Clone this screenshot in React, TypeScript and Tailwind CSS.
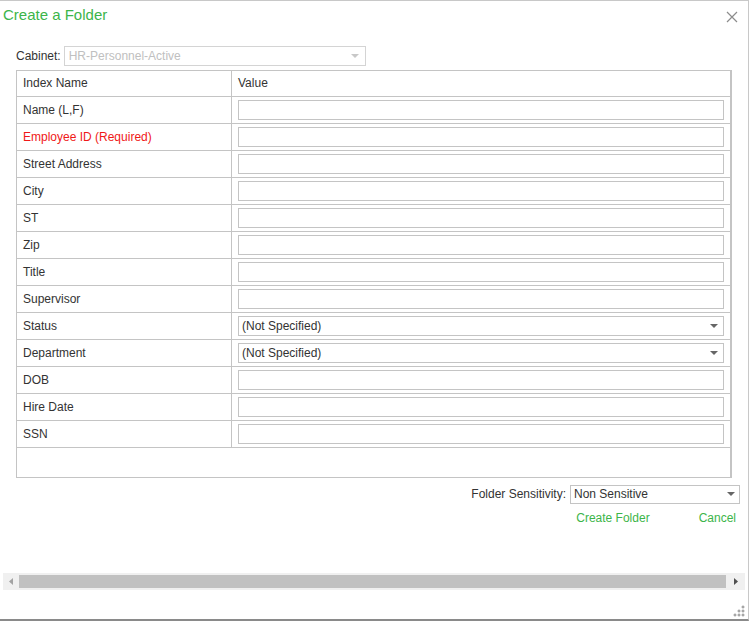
import React from 'react';

interface IndexField {
  name: string;
  kind: 'text' | 'select';
  required?: boolean;
}

const fields: IndexField[] = [
  { name: 'Name (L,F)', kind: 'text' },
  { name: 'Employee ID (Required)', kind: 'text', required: true },
  { name: 'Street Address', kind: 'text' },
  { name: 'City', kind: 'text' },
  { name: 'ST', kind: 'text' },
  { name: 'Zip', kind: 'text' },
  { name: 'Title', kind: 'text' },
  { name: 'Supervisor', kind: 'text' },
  { name: 'Status', kind: 'select' },
  { name: 'Department', kind: 'select' },
  { name: 'DOB', kind: 'text' },
  { name: 'Hire Date', kind: 'text' },
  { name: 'SSN', kind: 'text' },
];

const Caret = ({ color = '#666' }: { color?: string }) => (
  <svg width="8" height="4" viewBox="0 0 8 4">
    <path d="M0 0 L8 0 L4 4 Z" fill={color} />
  </svg>
);

export default function App() {
  return (
    <div className="w-[749px] h-[621px] bg-white text-[12px] text-[#333] font-['Liberation_Sans',Arial,sans-serif]">
      <div className="h-[621px] border-t border-r border-b-2 border-t-[#c8c8c8] border-r-[#c8c8c8] border-b-[#8a8a8a] flex flex-col">
        {/* header */}
        <div className="h-[28px] flex items-center justify-between pl-[3px] pr-[10px]">
          <span className="text-[15px] text-[#3cb54a]">Create a Folder</span>
          <svg width="12" height="12" viewBox="0 0 12 12" className="mt-[3px]">
            <path d="M1 1 L11 11 M11 1 L1 11" stroke="#8c8c8c" strokeWidth="1.2" />
          </svg>
        </div>

        {/* cabinet */}
        <div className="mt-[17px] h-[20px] flex items-center pl-[16px] leading-none pb-[1px]">
          <span className="mr-[3px]">Cabinet:</span>
          <div className="w-[302px] h-[20px] border border-[#d4d4d4] flex items-center justify-between pl-[4px] pr-[6px]">
            <span className="text-[#c0c0c0]">HR-Personnel-Active</span>
            <Caret color="#c8c8c8" />
          </div>
        </div>

        {/* index table */}
        <div className="mt-[4px] ml-[16px] w-[716px] h-[408px] border border-[#c4c4c4] border-r-2 leading-none">
          <div className="h-[26px] flex border-b border-[#c4c4c4]">
            <div className="w-[215px] border-r border-[#c4c4c4] pl-[6px] pb-[1px] flex items-center">Index Name</div>
            <div className="flex-1 pl-[6px] pb-[1px] flex items-center">Value</div>
          </div>
          {fields.map((f) => (
            <div key={f.name} className="h-[27px] flex border-b border-[#c4c4c4]">
              <div
                className={
                  f.required
                    ? 'w-[215px] border-r border-[#c4c4c4] pl-[6px] pb-[1px] flex items-center text-[#f01818]'
                    : 'w-[215px] border-r border-[#c4c4c4] pl-[6px] pb-[1px] flex items-center'
                }
              >
                {f.name}
              </div>
              <div className="flex-1 pl-[6px] pr-[6px] flex items-center">
                {f.kind === 'text' ? (
                  <div className="w-full h-[20px] border border-[#c4c4c4] bg-white" />
                ) : (
                  <div className="w-full h-[20px] border border-[#c4c4c4] bg-white flex items-center justify-between pl-[3px] pr-[5px] pb-[1px]">
                    <span>(Not Specified)</span>
                    <Caret />
                  </div>
                )}
              </div>
            </div>
          ))}
        </div>

        {/* sensitivity */}
        <div className="mt-[7px] h-[19px] flex items-center justify-end pr-[8px] leading-none">
          <span className="mr-[4px] pb-[1px]">Folder Sensitivity:</span>
          <div className="w-[170px] h-[19px] border border-[#c4c4c4] flex items-center justify-between pl-[3px] pr-[4px] pb-[1px]">
            <span>Non Sensitive</span>
            <Caret />
          </div>
        </div>

        {/* actions */}
        <div className="mt-[6px] h-[16px] flex items-center justify-end pr-[12px] text-[#3cb54a] leading-none pb-[1px]">
          <span>Create Folder</span>
          <span className="ml-[49px]">Cancel</span>
        </div>

        {/* horizontal scrollbar */}
        <div className="mt-[47px] ml-[3px] w-[742px] h-[17px] bg-[#f0f0f0] flex items-center">
          <div className="w-[16px] flex justify-center">
            <svg width="4" height="7" viewBox="0 0 4 7">
              <path d="M4 0 L4 7 L0 3.5 Z" fill="#a3a3a3" />
            </svg>
          </div>
          <div className="w-[707px] h-[13px] bg-[#c1c1c1]" />
          <div className="flex-1 flex justify-center">
            <svg width="4" height="7" viewBox="0 0 4 7">
              <path d="M0 0 L0 7 L4 3.5 Z" fill="#505050" />
            </svg>
          </div>
        </div>

        {/* resize grip */}
        <div className="flex-1 flex items-end justify-end pr-[3px] pb-[2px]">
          <svg width="12" height="12" viewBox="0 0 12 12">
            {[
              [10, 2],
              [6, 6],
              [10, 6],
              [2, 10],
              [6, 10],
              [10, 10],
            ].map(([x, y]) => (
              <path key={`${x}-${y}`} d={`M${x - 1.5} ${y} H${x + 1.5} M${x} ${y - 1.5} V${y + 1.5}`} stroke="#888" strokeWidth="1" />
            ))}
          </svg>
        </div>
      </div>
    </div>
  );
}
